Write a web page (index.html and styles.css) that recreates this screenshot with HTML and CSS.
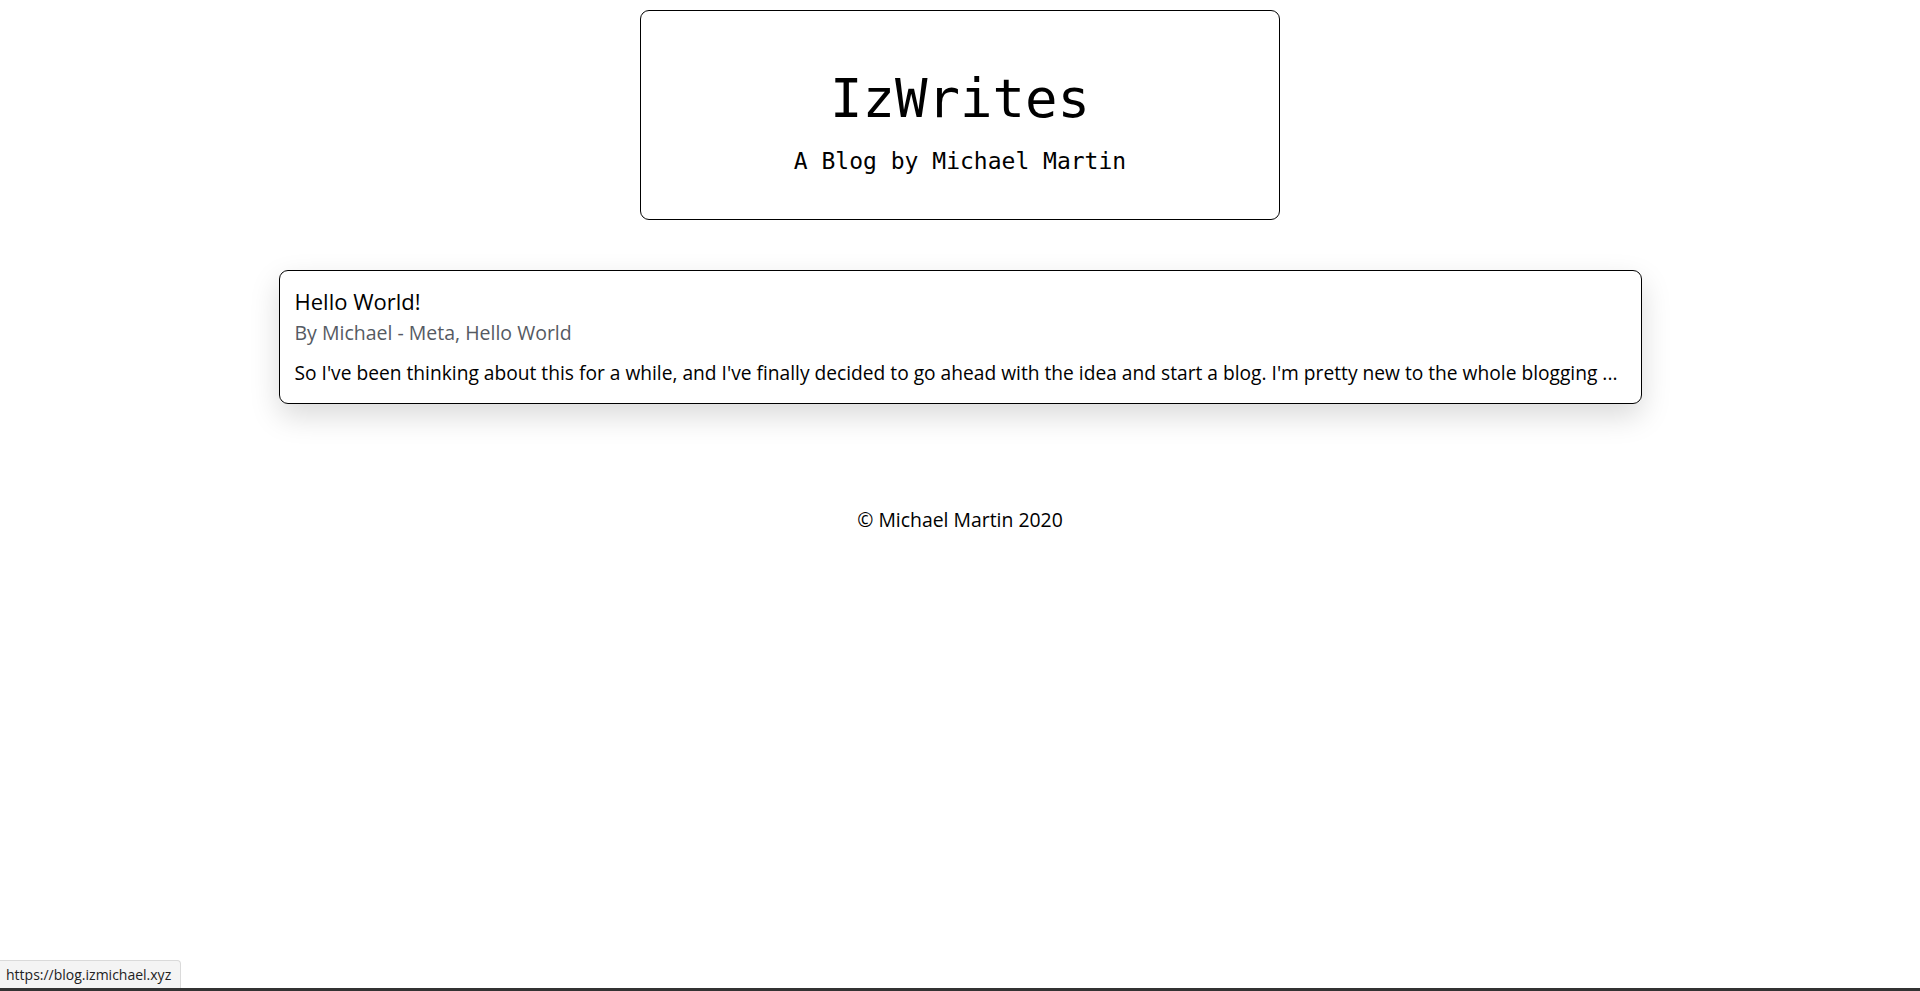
FILE: index.html
```html
<!DOCTYPE html>
<html lang="en">
<head>
<meta charset="utf-8">
<title>IzWrites</title>
<link rel="stylesheet" href="styles.css">
</head>
<body>
<header class="masthead">
  <h1 class="masthead-title">IzWrites</h1>
  <p class="masthead-sub">A Blog by Michael Martin</p>
</header>
<main class="posts">
  <a class="post-card" href="https://blog.izmichael.xyz">
    <h2 class="post-title">Hello World!</h2>
    <p class="post-meta">By Michael - Meta, Hello World</p>
    <p class="post-excerpt">So I've been thinking about this for a while, and I've finally decided to go ahead with the idea and start a blog. I'm pretty new to the whole blogging ...</p>
  </a>
</main>
<footer class="site-footer">© Michael Martin 2020</footer>
<div class="status-bar">https://blog.izmichael.xyz</div>
<div class="screen-edge"></div>
</body>
</html>
```

FILE: styles.css
```css
html, body {
  margin: 0;
  padding: 0;
  background: #fff;
}
body {
  font-family: "Open Sans", "Noto Sans", sans-serif;
  color: #000;
}
.masthead {
  box-sizing: border-box;
  width: 640px;
  height: 210px;
  margin: 10px auto 0;
  border: 1px solid #000;
  border-radius: 9px;
  text-align: center;
  font-family: "DejaVu Sans Mono", "Liberation Mono", monospace;
  padding-top: 61px;
}
.masthead-title {
  margin: 0;
  font-weight: normal;
  font-size: 54px;
  line-height: 54px;
}
.masthead-sub {
  margin: 22px 0 0;
  font-size: 23px;
  line-height: 26px;
}
.posts {
  display: flex;
  justify-content: center;
  margin-top: 50px;
}
.post-card {
  box-sizing: border-box;
  display: block;
  width: 1363px;
  height: 134px;
  border: 1px solid #000;
  border-radius: 9px;
  padding: 16px 15px 0;
  box-shadow: 0 12px 30px rgba(0, 0, 0, 0.15);
  text-decoration: none;
  color: #000;
}
.post-title {
  margin: 0;
  font-weight: normal;
  font-size: 22px;
  line-height: 28px;
}
.post-meta {
  margin: 2px 0 0;
  color: #555a63;
  font-size: 19.5px;
  line-height: 32px;
}
.post-excerpt {
  margin: 12px 0 0;
  font-size: 19.2px;
  line-height: 24px;
  white-space: nowrap;
}
.site-footer {
  margin-top: 104px;
  text-align: center;
  font-size: 19.4px;
  line-height: 24px;
}
.status-bar {
  position: fixed;
  left: 0;
  bottom: 3px;
  height: 27px;
  padding: 0 9px 0 6px;
  background: #f4f4f4;
  border: 1px solid #dadada;
  border-left: 0;
  border-bottom: 0;
  border-top-right-radius: 4px;
  font-family: "Open Sans", "Noto Sans", sans-serif;
  font-size: 14px;
  line-height: 27px;
  color: #222;
}
.screen-edge {
  position: fixed;
  left: 0;
  right: 0;
  bottom: 0;
  height: 3px;
  background: #333;
}
```
